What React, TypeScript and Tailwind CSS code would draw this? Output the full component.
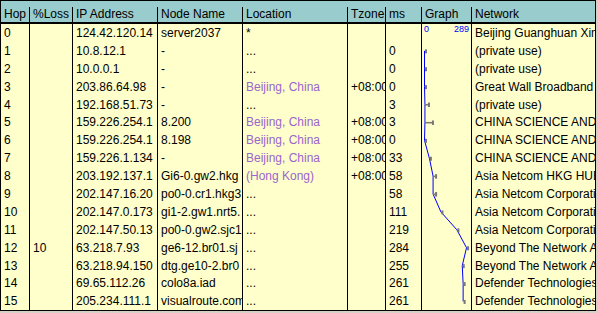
import React from "react";

type Row = {
  hop: string;
  loss?: string;
  ip: string;
  node: string;
  loc: string;
  geo?: boolean;
  tz?: string;
  ms?: string;
  net: string;
};

const ROWS: Row[] = [
  { hop: "0", ip: "124.42.120.14", node: "server2037", loc: "*", net: "Beijing Guanghuan Xinwang" },
  { hop: "1", ip: "10.8.12.1", node: "-", loc: "...", ms: "0", net: "(private use)" },
  { hop: "2", ip: "10.0.0.1", node: "-", loc: "...", ms: "0", net: "(private use)" },
  { hop: "3", ip: "203.86.64.98", node: "-", loc: "Beijing, China", geo: true, tz: "+08:00", ms: "0", net: "Great Wall Broadband" },
  { hop: "4", ip: "192.168.51.73", node: "-", loc: "...", ms: "3", net: "(private use)" },
  { hop: "5", ip: "159.226.254.1", node: "8.200", loc: "Beijing, China", geo: true, tz: "+08:00", ms: "3", net: "CHINA SCIENCE AND" },
  { hop: "6", ip: "159.226.254.1", node: "8.198", loc: "Beijing, China", geo: true, tz: "+08:00", ms: "0", net: "CHINA SCIENCE AND" },
  { hop: "7", ip: "159.226.1.134", node: "-", loc: "Beijing, China", geo: true, tz: "+08:00", ms: "33", net: "CHINA SCIENCE AND" },
  { hop: "8", ip: "203.192.137.1", node: "Gi6-0.gw2.hkg", loc: "(Hong Kong)", geo: true, tz: "+08:00", ms: "58", net: "Asia Netcom HKG HUB" },
  { hop: "9", ip: "202.147.16.20", node: "po0-0.cr1.hkg3", loc: "...", ms: "58", net: "Asia Netcom Corporation" },
  { hop: "10", ip: "202.147.0.173", node: "gi1-2.gw1.nrt5.", loc: "...", ms: "111", net: "Asia Netcom Corporation" },
  { hop: "11", ip: "202.147.50.13", node: "po0-0.gw2.sjc1", loc: "...", ms: "219", net: "Asia Netcom Corporation" },
  { hop: "12", loss: "10", ip: "63.218.7.93", node: "ge6-12.br01.sj", loc: "...", ms: "284", net: "Beyond The Network A" },
  { hop: "13", ip: "63.218.94.150", node: "dtg.ge10-2.br0", loc: "...", ms: "255", net: "Beyond The Network A" },
  { hop: "14", ip: "69.65.112.26", node: "colo8a.iad", loc: "...", ms: "261", net: "Defender Technologies" },
  { hop: "15", ip: "205.234.111.1", node: "visualroute.com", loc: "...", ms: "261", net: "Defender Technologies" },
];

// graph points: hop, rtt, optional spread (px to the right)
const POINTS: { hop: number; ms: number; spread?: number }[] = [
  { hop: 1, ms: 0 },
  { hop: 2, ms: 0 },
  { hop: 3, ms: 0 },
  { hop: 4, ms: 3, spread: 4 },
  { hop: 5, ms: 3, spread: 8 },
  { hop: 6, ms: 0 },
  { hop: 7, ms: 33 },
  { hop: 8, ms: 58, spread: 3 },
  { hop: 9, ms: 58, spread: 3 },
  { hop: 10, ms: 111 },
  { hop: 11, ms: 219 },
  { hop: 12, ms: 284 },
  { hop: 13, ms: 255 },
  { hop: 14, ms: 261 },
  { hop: 15, ms: 261 },
];

const ROW_H = 17.9;
const px = (ms: number) => 2.5 + ms * 0.148;
const py = (hop: number) => hop * ROW_H + ROW_H / 2;

const cell = "shrink-0 overflow-hidden whitespace-nowrap border-r border-black pl-[3px]";

function Graph() {
  const line = POINTS.map((p) => `${px(p.ms)},${py(p.hop)}`).join(" ");
  return (
    <svg className="absolute left-[422px] top-[24px]" width="49" height="287" viewBox="0 0 49 287">
      <polyline points={line} fill="none" stroke="#0000ff" strokeWidth="1" />
      {POINTS.map((p) => {
        const x = px(p.ms);
        const y = py(p.hop);
        return (
          <g key={p.hop} fill="#777777">
            {p.spread ? (
              <>
                <rect x={x} y={y - 0.5} width={p.spread} height={1.5} />
                <rect x={x + p.spread - 1} y={y - 2} width={2} height={4.5} />
              </>
            ) : (
              <rect x={x + 0.5} y={y - 1.5} width={2} height={4} />
            )}
          </g>
        );
      })}
    </svg>
  );
}

export default function App() {
  return (
    <div className="relative w-[598px] h-[313px] bg-[#d4d0c8] text-[12px] text-black [font-family:'Liberation_Sans',Arial,sans-serif]">
      <div className="w-[596px] border border-black bg-[#ffffcc]">
        {/* Header */}
        <div className="flex h-[23px] border-b-2 border-black bg-[#99cccc] leading-[14px] pt-[6px]">
          <div className={`${cell} w-[29px]`}>Hop</div>
          <div className={`${cell} w-[43px]`}>%Loss</div>
          <div className={`${cell} w-[85px]`}>IP Address</div>
          <div className={`${cell} w-[85px]`}>Node Name</div>
          <div className={`${cell} w-[105px]`}>Location</div>
          <div className={`${cell} w-[38px]`}>Tzone</div>
          <div className={`${cell} w-[36px]`}>ms</div>
          <div className={`${cell} w-[50px]`}>Graph</div>
          <div className="shrink-0 overflow-hidden whitespace-nowrap pl-[3px] w-[123px]">Network</div>
        </div>

        {/* Rows */}
        {ROWS.map((r, i) => (
          <div key={r.hop} className="flex h-[17.9px] leading-[18px]">
            <div className={`${cell} w-[29px]`}>{r.hop}</div>
            <div className={`${cell} w-[43px]`}>{r.loss}</div>
            <div className={`${cell} w-[85px]`}>{r.ip}</div>
            <div className={`${cell} w-[85px]`}>{r.node}</div>
            <div className={`${cell} w-[105px] ${r.geo ? "text-[#9966cc]" : ""}`}>{r.loc}</div>
            <div className={`${cell} w-[38px]`}>{r.tz}</div>
            <div className={`${cell} w-[36px]`}>{r.ms}</div>
            <div className="shrink-0 w-[50px] border-r border-black">
              {i === 0 && (
                <div className="flex justify-between pl-[2px] pr-[2px] text-[9px] leading-[10px] text-[#0000ff]">
                  <span>0</span>
                  <span>289</span>
                </div>
              )}
            </div>
            <div className="shrink-0 overflow-hidden whitespace-nowrap pl-[3px] w-[123px]">{r.net}</div>
          </div>
        ))}
      </div>
      <Graph />
    </div>
  );
}
